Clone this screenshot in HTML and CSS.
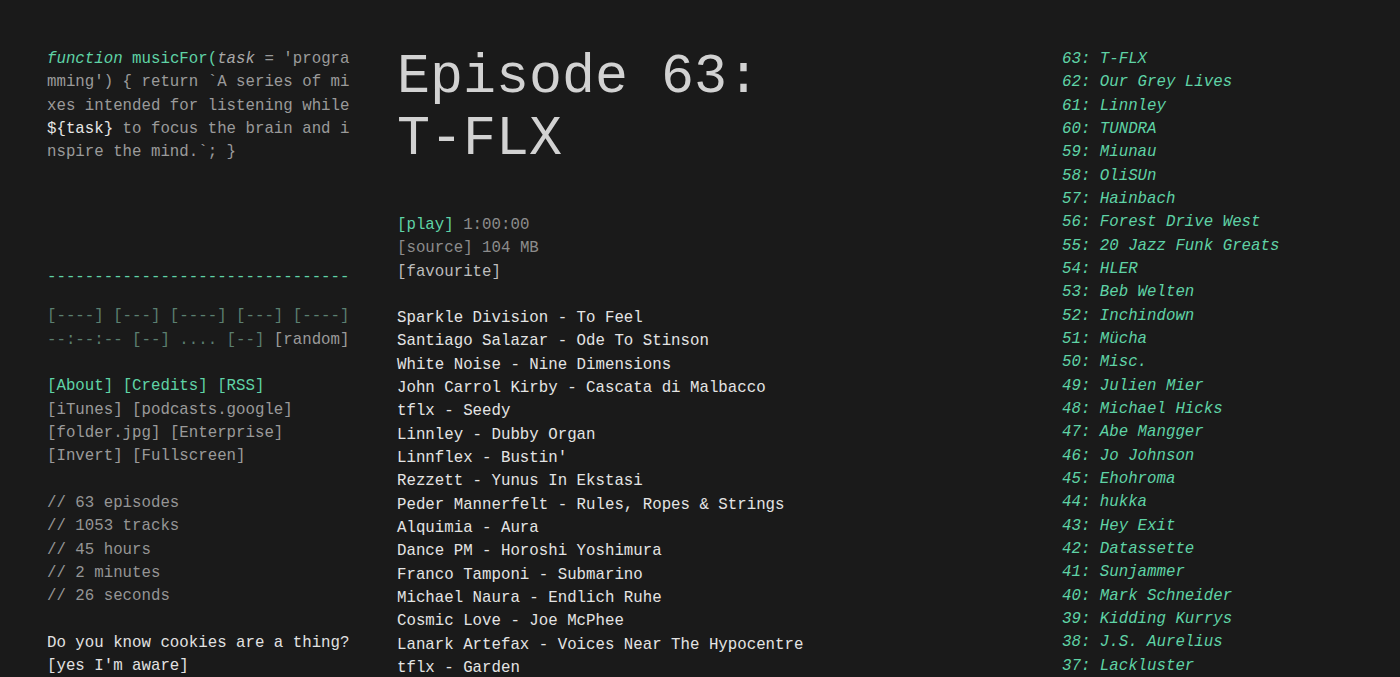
FILE: index.html
```html
<!DOCTYPE html>
<html lang="en">
<head>
<meta charset="utf-8">
<title>musicForProgramming();</title>
<link rel="stylesheet" href="styles.css">
</head>
<body>
<div class="page">
  <aside class="left">
    <p class="intro"><span class="kw">function</span> <span class="fn">musicFor(</span><span class="arg">task</span> = 'programming') { return `A series of mixes intended for listening while <span class="hl">${task}</span> to focus the brain and inspire the mind.`; }</p>

    <div class="progress">--------------------------------</div>

    <div class="group controls">
      <div>[----] [---] [----] [---] [----]</div>
      <div>--:--:-- [--] .... [--] <span class="grey">[random]</span></div>
    </div>

    <div class="group links">
      <div><a class="green" href="#">[About]</a> <a class="green" href="#">[Credits]</a> <a class="green" href="#">[RSS]</a></div>
      <div><a href="#">[iTunes]</a> <a href="#">[podcasts.google]</a></div>
      <div><a href="#">[folder.jpg]</a> <a href="#">[Enterprise]</a></div>
      <div><a href="#">[Invert]</a> <a href="#">[Fullscreen]</a></div>
    </div>

    <div class="group stats">
      <div>// 63 episodes</div>
      <div>// 1053 tracks</div>
      <div>// 45 hours</div>
      <div>// 2 minutes</div>
      <div>// 26 seconds</div>
    </div>

    <div class="group cookies">
      <div>Do you know cookies are a thing?</div>
      <div><a href="#">[yes I'm aware]</a></div>
    </div>
  </aside>

  <main class="middle">
    <h1 class="title">Episode 63:<br>T-FLX</h1>
    <div class="meta">
      <div><a class="green" href="#">[play]</a> 1:00:00</div>
      <div><a href="#">[source]</a> 104 MB</div>
      <div class="fav"><a href="#">[favourite]</a></div>
    </div>
    <ol class="tracks">
      <li>Sparkle Division - To Feel</li>
      <li>Santiago Salazar - Ode To Stinson</li>
      <li>White Noise - Nine Dimensions</li>
      <li>John Carrol Kirby - Cascata di Malbacco</li>
      <li>tflx - Seedy</li>
      <li>Linnley - Dubby Organ</li>
      <li>Linnflex - Bustin'</li>
      <li>Rezzett - Yunus In Ekstasi</li>
      <li>Peder Mannerfelt - Rules, Ropes &amp; Strings</li>
      <li>Alquimia - Aura</li>
      <li>Dance PM - Horoshi Yoshimura</li>
      <li>Franco Tamponi - Submarino</li>
      <li>Michael Naura - Endlich Ruhe</li>
      <li>Cosmic Love - Joe McPhee</li>
      <li>Lanark Artefax - Voices Near The Hypocentre</li>
      <li>tflx - Garden</li>
    </ol>
  </main>

  <nav class="right">
    <ol class="episodes">
      <li><a href="#">63: T-FLX</a></li>
      <li><a href="#">62: Our Grey Lives</a></li>
      <li><a href="#">61: Linnley</a></li>
      <li><a href="#">60: TUNDRA</a></li>
      <li><a href="#">59: Miunau</a></li>
      <li><a href="#">58: OliSUn</a></li>
      <li><a href="#">57: Hainbach</a></li>
      <li><a href="#">56: Forest Drive West</a></li>
      <li><a href="#">55: 20 Jazz Funk Greats</a></li>
      <li><a href="#">54: HLER</a></li>
      <li><a href="#">53: Beb Welten</a></li>
      <li><a href="#">52: Inchindown</a></li>
      <li><a href="#">51: Mücha</a></li>
      <li><a href="#">50: Misc.</a></li>
      <li><a href="#">49: Julien Mier</a></li>
      <li><a href="#">48: Michael Hicks</a></li>
      <li><a href="#">47: Abe Mangger</a></li>
      <li><a href="#">46: Jo Johnson</a></li>
      <li><a href="#">45: Ehohroma</a></li>
      <li><a href="#">44: hukka</a></li>
      <li><a href="#">43: Hey Exit</a></li>
      <li><a href="#">42: Datassette</a></li>
      <li><a href="#">41: Sunjammer</a></li>
      <li><a href="#">40: Mark Schneider</a></li>
      <li><a href="#">39: Kidding Kurrys</a></li>
      <li><a href="#">38: J.S. Aurelius</a></li>
      <li><a href="#">37: Lackluster</a></li>
    </ol>
  </nav>
</div>
</body>
</html>
```

FILE: styles.css
```css
html, body {
  margin: 0;
  padding: 0;
  background: #1a1a1a;
}

body {
  font-family: "Liberation Mono", "DejaVu Sans Mono", monospace;
  font-size: 15.75px;
  line-height: 23.33px;
  color: #9a9a9a;
}

a {
  color: inherit;
  text-decoration: none;
}

.page {
  display: grid;
  grid-template-columns: 303px 618px 291px;
  column-gap: 47px;
  padding: 48px 47px 0 47px;
}

/* left column */
.intro {
  margin: 0;
  word-break: break-all;
  color: #9a9a9a;
}

.kw {
  color: #5fd3a6;
  font-style: italic;
}

.fn {
  color: #5fd3a6;
}

.arg {
  font-style: italic;
  color: #a8a8a8;
}

.hl {
  color: #e6e6e6;
}

.progress {
  margin-top: 101px;
  color: #5fd3a6;
  white-space: nowrap;
  overflow: hidden;
}

.group {
  margin-top: 23.33px;
}

.controls {
  margin-top: 16.5px;
  color: #5b7f70;
}

.grey {
  color: #9a9a9a;
}

.green {
  color: #5fd3a6;
}

.links {
  color: #9a9a9a;
}

.stats {
  color: #959595;
}

.cookies {
  color: #e2e2e2;
}

/* middle column */
.title {
  margin: -1px 0 0 0;
  font-size: 55px;
  line-height: 61.7px;
  font-weight: 300;
  color: #d2d2d2;
}

.meta {
  margin-top: 43.6px;
  color: #8c8c8c;
}

.fav {
  color: #bdbdbd;
}

.tracks {
  list-style: none;
  margin: 23px 0 0 0;
  padding: 0;
  color: #e4e4e4;
}

/* right column */
.episodes {
  list-style: none;
  margin: 0;
  padding: 0;
  font-style: italic;
  color: #5fd3a6;
}
```
